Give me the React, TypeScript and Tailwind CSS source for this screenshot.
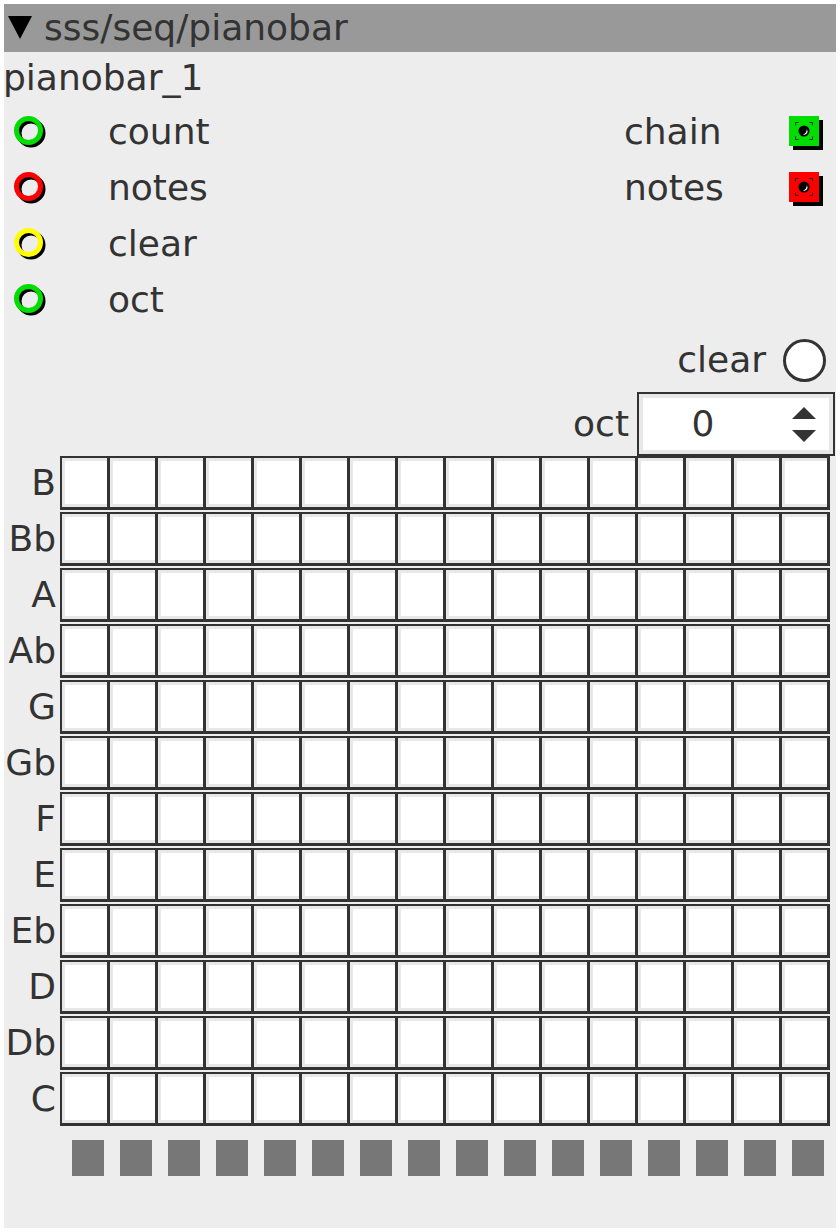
import React from "react";

const FONT = { fontFamily: '"DejaVu Sans", "Liberation Sans", sans-serif' };

function Ring({ color }: { color: string }) {
  return (
    <svg width="40" height="40" viewBox="0 0 40 40" className="block">
      <circle cx="19" cy="19" r="12" fill="none" stroke="#000" strokeWidth="5" />
      <circle cx="16.5" cy="16.5" r="12" fill="none" stroke={color} strokeWidth="5" />
    </svg>
  );
}

function OutBox({ color }: { color: string }) {
  return (
    <svg width="36" height="36" viewBox="0 0 36 36" className="block">
      <rect x="4" y="4" width="30" height="30" fill="#000" />
      <rect x="0" y="0" width="30" height="30" fill={color} />
      <path d="M6.5 9.5v-3h3M20.5 6.5h3v3M23.5 20.5v3h-3M9.5 23.5h-3v-3" fill="none" stroke="#222" strokeWidth="1" />
      <circle cx="15" cy="15" r="5.5" fill="#000" />
      <path d="M17.6 13.2 A3.2 3.2 0 0 1 14 18.4 A4.5 4.5 0 0 0 17.6 13.2Z" fill="#fff" />
    </svg>
  );
}

const notes = ["B", "Bb", "A", "Ab", "G", "Gb", "F", "E", "Eb", "D", "Db", "C"];

export default function App() {
  const cols = Array.from({ length: 16 }, (_, i) => i);
  return (
    <div className="w-[840px] h-[1232px] bg-white p-[4px]" style={FONT}>
      <div className="w-[832px] h-[1224px] bg-[#ededed] text-[#333] text-[36px] leading-none flex flex-col">
        {/* header */}
        <div className="h-[48px] bg-[#999] flex items-center shrink-0">
          <svg width="24" height="24" viewBox="0 0 24 24" className="ml-[4px] block">
            <polygon points="0,0 24,0 12,23" fill="#000" />
          </svg>
          <span className="ml-[12px]">sss/seq/pianobar</span>
        </div>
        {/* title */}
        <div className="h-[52px] flex items-center shrink-0">
          <span className="ml-[-1px]">pianobar_1</span>
        </div>
        {/* io */}
        <div className="flex h-[224px] shrink-0">
          <div className="w-[620px] flex flex-col">
            {[
              ["#00dd00", "count"],
              ["#ff0000", "notes"],
              ["#ffff00", "clear"],
              ["#00dd00", "oct"],
            ].map(([c, l]) => (
              <div key={l} className="h-[56px] flex items-center">
                <div className="ml-[8px] w-[40px] mt-[4px]">
                  <Ring color={c} />
                </div>
                <span className="ml-[56px]">{l}</span>
              </div>
            ))}
          </div>
          <div className="flex-1 flex flex-col">
            {[
              ["#00dd00", "chain"],
              ["#ff0000", "notes"],
            ].map(([c, l]) => (
              <div key={l} className="h-[56px] flex items-center">
                <span className="w-[165px]">{l}</span>
                <div className="mt-[4px]">
                  <OutBox color={c} />
                </div>
              </div>
            ))}
          </div>
        </div>
        {/* clear */}
        <div className="h-[64px] flex items-center justify-end shrink-0 pr-[10px]">
          <span>clear</span>
          <div className="ml-[17px] w-[43px] h-[43px] rounded-full border-[3px] border-[#333] bg-white" />
        </div>
        {/* oct */}
        <div className="h-[64px] flex items-center justify-end shrink-0 pr-[1px]">
          <span>oct</span>
          <div className="ml-[8px] w-[198px] h-[64px] border-2 border-[#333] bg-white flex shadow-[inset_0_0_0_4px_#e8e8e8]">
            <div className="w-[128px] flex items-center justify-center">0</div>
            <div className="flex-1 flex flex-col items-center justify-center gap-[11px] pl-[8px]">
              <svg width="24" height="12" viewBox="0 0 24 12" className="block">
                <polygon points="12,0 24,12 0,12" fill="#333" />
              </svg>
              <svg width="24" height="12" viewBox="0 0 24 12" className="block">
                <polygon points="0,0 24,0 12,12" fill="#333" />
              </svg>
            </div>
          </div>
        </div>
        {/* grid */}
        <div className="flex flex-col gap-[2px] shrink-0">
          {notes.map((n) => (
            <div key={n} className="flex h-[54px]">
              <div className="w-[52px] flex items-center justify-end">{n}</div>
              <div className="ml-[4px] w-[770px] bg-[#333] pt-[2px] pb-[3px] pl-[2px] pr-[3px] flex gap-[3px]">
                {cols.map((i) => (
                  <div key={i} className="flex-1 bg-white shadow-[inset_3px_3px_0_#e8e8e8,inset_0_-3px_0_#e8e8e8]" />
                ))}
              </div>
            </div>
          ))}
        </div>
        {/* bottom squares */}
        <div className="flex gap-[16px] ml-[68px] mt-[14px]">
          {cols.map((i) => (
            <div key={i} className="w-[32px] h-[36px] bg-[#777]" />
          ))}
        </div>
      </div>
    </div>
  );
}
